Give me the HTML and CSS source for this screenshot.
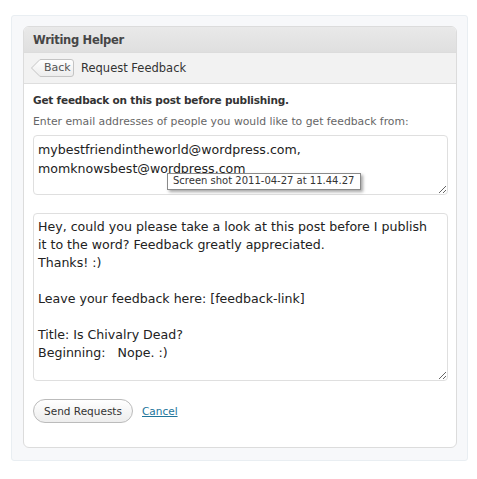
FILE: index.html
```html
<!DOCTYPE html>
<html>
<head>
<meta charset="utf-8">
<link rel="stylesheet" href="styles.css">
</head>
<body>
<div class="frame">
  <div class="panel">
    <div class="panel-header">Writing Helper</div>
    <div class="nav">
      <span class="back">
        <svg class="back-shape" width="43" height="18" viewBox="0 0 43 18">
          <defs>
            <linearGradient id="bg" x1="0" y1="0" x2="0" y2="1">
              <stop offset="0" stop-color="#ffffff"/>
              <stop offset="1" stop-color="#ececec"/>
            </linearGradient>
          </defs>
          <path d="M0.5 9 L8 1.5 Q8.5 0.5 10 0.5 L40 0.5 Q42.5 0.5 42.5 3 L42.5 15 Q42.5 17.5 40 17.5 L10 17.5 Q8.5 17.5 8 16.5 Z" fill="url(#bg)" stroke="#c4c4c4"/>
        </svg>
        <span class="back-label">Back</span>
      </span>
      <span class="nav-title">Request Feedback</span>
    </div>
    <div class="content">
      <p class="lead">Get feedback on this post before publishing.</p>
      <p class="hint">Enter email addresses of people you would like to get feedback from:</p>
      <div class="field">
        <textarea class="emails">mybestfriendintheworld@wordpress.com,
momknowsbest@wordpress.com</textarea>
        <div class="tooltip">Screen shot 2011-04-27 at 11.44.27</div>
      </div>
      <textarea class="message">Hey, could you please take a look at this post before I publish
it to the word? Feedback greatly appreciated.
Thanks! :)

Leave your feedback here: [feedback-link]

Title: Is Chivalry Dead?
Beginning:   Nope. :)</textarea>
      <div class="actions">
        <button class="send">Send Requests</button>
        <a class="cancel" href="#">Cancel</a>
      </div>
    </div>
  </div>
</div>
</body>
</html>
```

FILE: styles.css
```css
html, body {
  margin: 0;
  padding: 0;
  background: #fff;
}
body {
  font-family: "DejaVu Sans", sans-serif;
  color: #333;
}
.frame {
  margin: 15px 0 0 11px;
  width: 457px;
  height: 446px;
  box-sizing: border-box;
  padding: 11px 11px 0 12px;
  background: #f7f8fa;
  border: 1px solid #e9eef2;
  border-radius: 3px;
}
.panel {
  margin-top: -1px;
  margin-left: -1px;
  width: 434px;
  height: 422px;
  box-sizing: border-box;
  background: #fff;
  border: 1px solid #dcdcdc;
  border-radius: 6px;
  overflow: hidden;
}
.panel-header {
  height: 26px;
  box-sizing: border-box;
  padding: 6px 0 0 9px;
  font-size: 11.5px;
  letter-spacing: -0.3px;
  font-weight: bold;
  color: #464646;
  background: linear-gradient(#e9e9e9, #dfdfdf);
  border-bottom: 1px solid #dcdcdc;
}
.nav {
  height: 31px;
  box-sizing: border-box;
  display: flex;
  align-items: center;
  padding-left: 7px;
  background: #f2f2f2;
  border-bottom: 1px solid #dedede;
}
.back {
  position: relative;
  width: 43px;
  height: 18px;
  display: inline-block;
}
.back-shape {
  position: absolute;
  left: 0;
  top: 0;
}
.back-label {
  position: absolute;
  left: 13px;
  top: 2px;
  font-size: 11px;
  color: #555;
}
.nav-title {
  margin-left: 7px;
  font-size: 11.5px;
  color: #333;
}
.content {
  padding: 10px 8px 0 9px;
}
.lead {
  margin: 0;
  font-size: 10.5px;
  letter-spacing: -0.2px;
  font-weight: bold;
  color: #333;
}
.hint {
  margin: 9px 0 0;
  font-size: 10.8px;
  color: #666;
}
.field {
  position: relative;
  margin-top: 7px;
}
textarea {
  display: block;
  width: 415px;
  box-sizing: border-box;
  margin: 0;
  border: 1px solid #dfdfdf;
  border-radius: 4px;
  font-family: "DejaVu Sans", sans-serif;
  color: #222;
  background: #fff;
  resize: both;
  outline: none;
}
.emails {
  height: 60px;
  padding: 4px 4px;
  font-size: 12.6px;
  line-height: 19px;
}
.tooltip {
  position: absolute;
  left: 134px;
  top: 38px;
  width: 194px;
  height: 17px;
  box-sizing: border-box;
  padding: 1px 0 0 5px;
  font-size: 10px;
  color: #333;
  background: #fff;
  border: 1px solid #8a8a8a;
  box-shadow: 2px 2px 3px rgba(0,0,0,0.35);
  white-space: nowrap;
}
.message {
  margin-top: 18px;
  height: 168px;
  padding: 4px 4px;
  font-size: 12.6px;
  line-height: 18px;
}
.actions {
  margin-top: 18px;
  display: flex;
  align-items: center;
}
.send {
  height: 24px;
  width: 100px;
  padding: 0;
  font-family: "DejaVu Sans", sans-serif;
  font-size: 10.5px;
  color: #333;
  background: linear-gradient(#ffffff, #ededed);
  border: 1px solid #bbb;
  border-radius: 12px;
}
.cancel {
  margin-left: 9px;
  font-size: 10.5px;
  color: #21759b;
  text-decoration: underline;
}
```
